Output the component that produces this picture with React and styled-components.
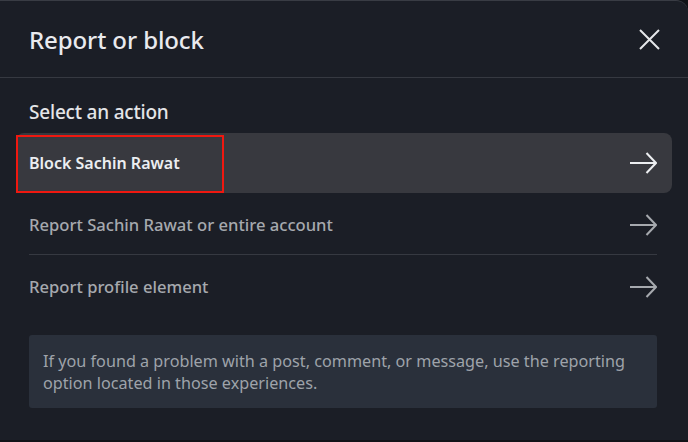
import styled, { createGlobalStyle } from "styled-components"

const Global = createGlobalStyle`
  html, body {
    margin: 0;
    padding: 0;
    background: #111318;
  }
  body {
    font-family: "Noto Sans", "Open Sans", sans-serif;
  }
`

const Modal = styled.div`
  width: 688px;
  height: 440px;
  box-sizing: border-box;
  background: #1b1e26;
  border-top: 1px solid #393c44;
  border-top-right-radius: 12px;
  display: flex;
  flex-direction: column;
`

const Header = styled.div`
  height: 77px;
  box-sizing: border-box;
  padding: 0 29px;
  display: flex;
  align-items: center;
  justify-content: space-between;
  border-bottom: 1px solid #363941;
`

const Title = styled.h2`
  margin: 0;
  font-size: 24px;
  font-weight: 500;
  color: #e9eaee;
  letter-spacing: -0.1px;
`

const CloseBtn = styled.button`
  background: none;
  border: none;
  padding: 0;
  margin-right: -1px;
  width: 22px;
  height: 22px;
  display: flex;
  align-items: center;
  justify-content: center;
  color: #e6e7ea;
`

const Body = styled.div`
  padding: 21px 16px 0 16px;
  display: flex;
  flex-direction: column;
`

const SectionLabel = styled.div`
  padding-left: 13px;
  font-size: 19px;
  font-weight: 500;
  color: #e4e5e8;
  height: 26px;
  line-height: 26px;
  margin-bottom: 8px;
  letter-spacing: -0.2px;
`

const Row = styled.div`
  position: relative;
  box-sizing: border-box;
  height: ${p => (p.$active ? 60 : 61)}px;
  display: flex;
  align-items: center;
  justify-content: space-between;
  padding: ${p => (p.$active ? "0 15px 0 13px" : "2px 15px 0 13px")};
  border-radius: 8px;
  background: ${p => (p.$active ? "#38393f" : "transparent")};
  color: ${p => (p.$active ? "#eceef1" : "#a6a9ae")};
  font-size: ${p => (p.$active ? 16 : 16.6)}px;
  font-weight: ${p => (p.$active ? 600 : 500)};
`

const Divider = styled.div`
  height: 1px;
  margin: 0 15px 0 13px;
  background: #363941;
`

const Highlight = styled.div`
  position: absolute;
  left: 0;
  top: 2px;
  width: 208px;
  height: 58px;
  box-sizing: border-box;
  border: 2px solid #f01810;
`

const Notice = styled.div`
  margin: 19px 15px 0 13px;
  background: #2a303b;
  border-radius: 3px;
  padding: 15px 14px 14px 14px;
  font-size: 16.2px;
  line-height: 22px;
  color: #9ea3aa;
`

const Arrow = ({ color }) => (
  <svg width="28" height="24" viewBox="0 0 28 24" fill="none" stroke={color} strokeWidth="2">
    <path d="M1 12H27" />
    <path d="M17.5 2L27 12L17.5 22" />
  </svg>
)

const actions = [
  { label: "Block Sachin Rawat", active: true },
  { label: "Report Sachin Rawat or entire account" },
  { label: "Report profile element" },
]

const App = () => {
  return (
    <>
      <Global />
      <Modal>
        <Header>
          <Title>Report or block</Title>
          <CloseBtn>
            <svg width="21" height="21" viewBox="0 0 21 21" stroke="currentColor" strokeWidth="2">
              <path d="M1 1L20 20M20 1L1 20" />
            </svg>
          </CloseBtn>
        </Header>
        <Body>
          <SectionLabel>Select an action</SectionLabel>
          {actions.map((a, i) => (
            <div key={a.label}>
              {i === 2 && <Divider />}
              <Row $active={a.active}>
                {a.active && <Highlight />}
                <span>{a.label}</span>
                <Arrow color={a.active ? "#eceef1" : "#a6a9ae"} />
              </Row>
            </div>
          ))}
          <Notice>
            If you found a problem with a post, comment, or message, use the reporting
            option located in those experiences.
          </Notice>
        </Body>
      </Modal>
    </>
  )
}

export default App
